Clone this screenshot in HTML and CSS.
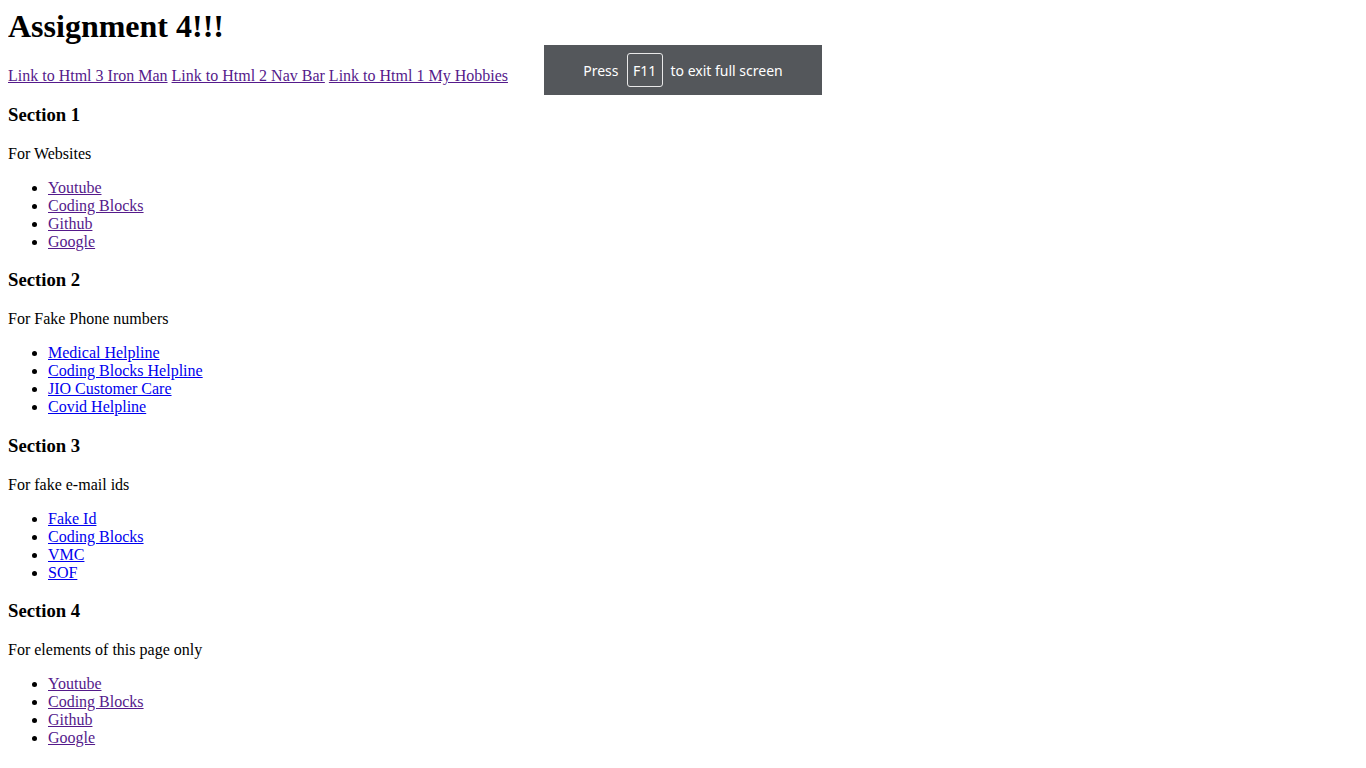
FILE: index.html
```html
<!DOCTYPE html>
<html>
<head>
<meta charset="utf-8">
<title>Assignment 4</title>
<link rel="stylesheet" href="styles.css">
</head>
<body>
<h1 class="title">Assignment 4!!!</h1>
<p class="nav"><a class="visited" href="#">Link to Html 3 Iron Man</a> <a class="visited" href="#">Link to Html 2 Nav Bar</a> <a class="visited" href="#">Link to Html 1 My Hobbies</a></p>

<h3>Section 1</h3>
<p>For Websites</p>
<ul>
<li><a class="visited" href="#">Youtube</a></li>
<li><a class="visited" href="#">Coding Blocks</a></li>
<li><a class="visited" href="#">Github</a></li>
<li><a class="visited" href="#">Google</a></li>
</ul>

<h3>Section 2</h3>
<p>For Fake Phone numbers</p>
<ul>
<li><a href="#">Medical Helpline</a></li>
<li><a href="#">Coding Blocks Helpline</a></li>
<li><a href="#">JIO Customer Care</a></li>
<li><a href="#">Covid Helpline</a></li>
</ul>

<h3>Section 3</h3>
<p>For fake e-mail ids</p>
<ul>
<li><a href="#">Fake Id</a></li>
<li><a href="#">Coding Blocks</a></li>
<li><a href="#">VMC</a></li>
<li><a href="#">SOF</a></li>
</ul>

<h3>Section 4</h3>
<p>For elements of this page only</p>
<ul>
<li><a class="visited" href="#">Youtube</a></li>
<li><a class="visited" href="#">Coding Blocks</a></li>
<li><a class="visited" href="#">Github</a></li>
<li><a class="visited" href="#">Google</a></li>
</ul>

<div class="fs-toast">
<span>Press</span>
<span class="key">F11</span>
<span>to exit full screen</span>
</div>
</body>
</html>
```

FILE: styles.css
```css
html, body {
  background: #ffffff;
}
body {
  margin: 8px;
  font-family: "Liberation Serif", "Times New Roman", serif;
  font-size: 16px;
  color: #000000;
}
.title {
  margin-top: 0;
  margin-bottom: 21.44px;
  font-size: 32px;
  line-height: 37.8px;
  font-weight: bold;
}
a {
  color: #0000ee;
}
a.visited {
  color: #551a8b;
}
.fs-toast {
  position: absolute;
  left: 544px;
  top: 45px;
  width: 278px;
  height: 50px;
  background: #54575b;
  color: #ffffff;
  font-family: "Noto Sans", "Open Sans", sans-serif;
  font-size: 14px;
  display: flex;
  align-items: center;
  justify-content: center;
  gap: 8px;
}
.fs-toast .key {
  display: flex;
  align-items: center;
  justify-content: center;
  width: 34px;
  height: 32px;
  border: 1px solid #e8e8e8;
  border-radius: 3px;
}
```
